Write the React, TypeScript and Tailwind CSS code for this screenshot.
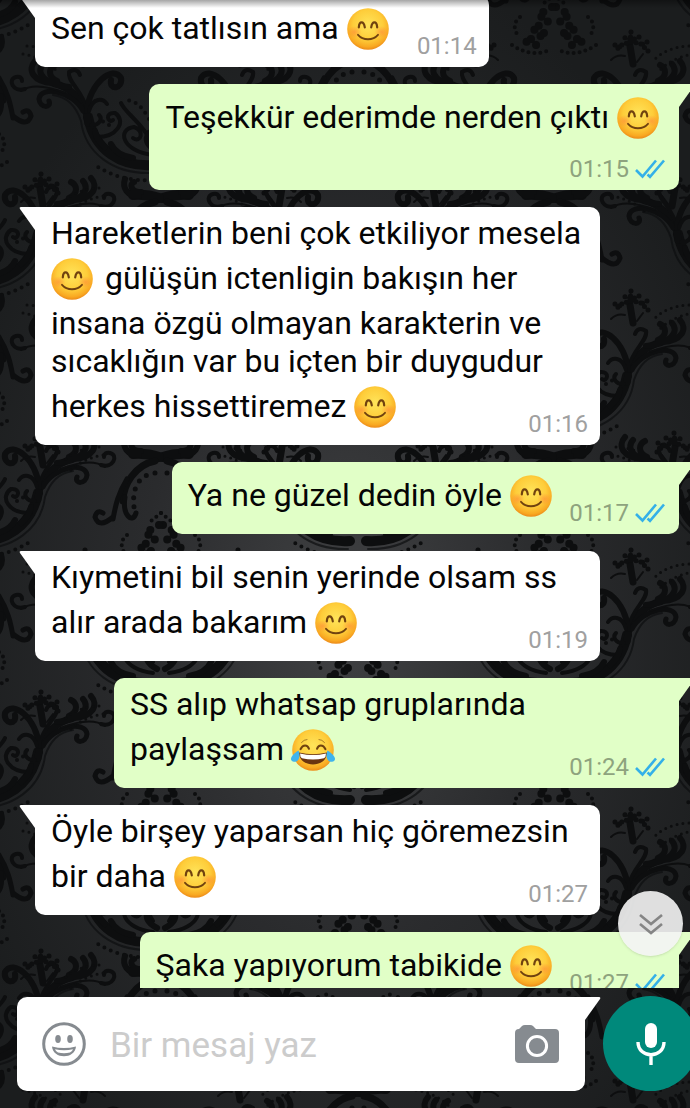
import { useState } from 'react';

interface Message {
  text: string;
  emoji: 'smile' | 'joy';
  after?: string;
  lastEmoji?: boolean;
  time: string;
  sent?: boolean;
  stacked?: boolean;
}

const messages: Message[] = [
  { text: 'Sen çok tatlısın ama', emoji: 'smile', time: '01:14' },
  { text: 'Teşekkür ederimde nerden çıktı', emoji: 'smile', time: '01:15', sent: true, stacked: true },
  {
    text: 'Hareketlerin beni çok etkiliyor mesela',
    emoji: 'smile',
    after: 'gülüşün ictenligin bakışın her insana özgü olmayan karakterin ve sıcaklığın var bu içten bir duygudur herkes hissettiremez',
    lastEmoji: true,
    time: '01:16',
  },
  { text: 'Ya ne güzel dedin öyle', emoji: 'smile', time: '01:17', sent: true },
  { text: 'Kıymetini bil senin yerinde olsam ss alır arada bakarım', emoji: 'smile', time: '01:19' },
  { text: 'SS alıp whatsap gruplarında paylaşsam', emoji: 'joy', time: '01:24', sent: true },
  { text: 'Öyle birşey yaparsan hiç göremezsin bir daha', emoji: 'smile', time: '01:27' },
  { text: 'Şaka yapıyorum tabikide', emoji: 'smile', time: '01:27', sent: true },
];

// Motif origins of the half-drop damask repeat
const columns = [-35, 161, 358, 554, 751];
const motifs = columns.flatMap((x, i) =>
  [0, 1, 2, 3, 4, 5].map((row) => ({ x, y: (i % 2 ? -67 : -209) + row * 259 })),
);

function Wallpaper() {
  return (
    <svg className="absolute inset-0 h-full w-full" aria-hidden="true">
      <defs>
        <radialGradient id="glow" cx="50%" cy="56%" r="60%">
          <stop offset="0" stopColor="#404143" />
          <stop offset="0.5" stopColor="#2a2b2d" />
          <stop offset="1" stopColor="#1b1d1e" />
        </radialGradient>
        <g id="half" fill="none" stroke="#0d0e0f" strokeLinecap="round">
          <path strokeWidth="10" d="M2 6Q14 2 28 3" />
          <path strokeWidth="6" d="M22 4C34 4 39-4 36-13M20 0C30 0 32-8 27-10" />
          <path strokeWidth="7" d="M6 10C26 14 38 34 38 50" />
          <path strokeWidth="5" d="M36 46C39 65 28 73 25 62M34 28C44 44 46 58 48 68M48 66Q62 78 66 66Q64 58 58 62" />
          <path strokeWidth="5" strokeDasharray="0 9" d="M6 22C24 24 29 40 27 56" />
          <path strokeWidth="8" strokeDasharray="0 10" d="M2 74L16 82L5 88L22 96L7 101L30 108L12 114" />
          <path strokeWidth="4" strokeDasharray="0 6" d="M0 62L10 70M34 84Q44 92 35 104M42 112Q24 124 7 118" />
          <path strokeWidth="10" d="M8 232C40 234 66 218 73 184" />
          <path strokeWidth="2" strokeOpacity="0.7" d="M10 240C48 241 76 220 80 188C84 176 92 164 108 162" />
          <path strokeWidth="7" d="M73 190C74 168 91 154 110 149" />
          <path strokeWidth="5" d="M78 178C88 158 120 152 122 166C121 176 109 175 112 168" />
          <path strokeWidth="6" d="M92 154C116 152 126 140 118 131M104 148C114 143 112 135 106 132M108 150C128 149 134 137 126 128" />
          <path strokeWidth="2" d="M96 160Q126 148 140 158" />
          <path strokeWidth="4" d="M136 156C148 160 154 146 145 144Q139 143 139 148M74 176C80 156 94 148 92 139Q84 134 81 142" />
          <path strokeWidth="6" d="M74 178C72 151 48 131 40 145C38 156 52 158 50 147" />
          <path strokeWidth="4" d="M72 178C68 164 58 165 54 171M66 204C44 205 34 188 46 180C57 179 53 191 48 187" />
          <path strokeWidth="4" d="M8 222C40 218 44 196 27 194C16 197 20 211 28 205M8 211C20 188 36 180 40 170M70 192C62 193 58 186 62 182" />
          <path strokeWidth="6" d="M4 218Q19 210 12 200M28 225Q45 222 50 211M56 214Q64 208 66 198" />
          <path strokeWidth="4" strokeDasharray="0 7" d="M2 247C30 249 50 243 66 232M12 186Q24 164 38 168M52 192L62 186" />
          <path strokeWidth="7" d="M118 14L121-4" />
          <path strokeWidth="5" strokeDasharray="0 5" d="M103 1L110-6L118-8L128-6L135 0M112-13L119-10L128-13M120-18L121-8M104-8L112-4M136-5L128-2" />
          <path strokeWidth="2" d="M108 4L114 12M126 6Q134 4 140 10" />
          <path strokeWidth="3" strokeDasharray="0 6" d="M58 4Q79 8 91 20M62-4Q85-3 98 11" />
        </g>
        <g id="motif">
          <use href="#half" />
          <use href="#half" transform="scale(-1 1)" />
        </g>
        <radialGradient id="face" cx="50%" cy="40%" r="60%">
          <stop offset="0" stopColor="#ffe45a" />
          <stop offset="0.6" stopColor="#fecd3a" />
          <stop offset="0.88" stopColor="#f9a922" />
          <stop offset="1" stopColor="#ec8a18" />
        </radialGradient>
        <radialGradient id="blush">
          <stop offset="0" stopColor="#ff7038" stopOpacity="0.45" />
          <stop offset="1" stopColor="#ff7038" stopOpacity="0" />
        </radialGradient>
      </defs>
      <rect width="100%" height="100%" fill="url(#glow)" />
      {motifs.map((m) => (
        <use key={`${m.x}-${m.y}`} href="#motif" x={m.x} y={m.y} />
      ))}
    </svg>
  );
}

function Emoji({ kind }: { kind: 'smile' | 'joy' }) {
  return (
    <svg
      role="img"
      aria-label={kind === 'smile' ? '😊' : '😂'}
      viewBox="0 0 42 42"
      className="mt-1.5 mr-1 mb-1 inline-block h-[42px] w-[42px] overflow-visible align-[-15px]"
    >
      <circle cx="21" cy="21" r="20.8" fill="url(#face)" />
      {kind === 'smile' ? (
        <>
          <ellipse cx="7.5" cy="24" rx="7" ry="6" fill="url(#blush)" />
          <ellipse cx="34.5" cy="24" rx="7" ry="6" fill="url(#blush)" />
          <g fill="none" stroke="#70420f" strokeWidth="2.2" strokeLinecap="round">
            <path d="M11.8 19.4C12.3 12.8 16.7 12.8 17.8 19.4" />
            <path d="M24.2 19.4C25.3 12.8 29.7 12.8 30.2 19.4" />
            <path strokeWidth="1.8" d="M11 26.8C16 32.7 26 32.7 31 26.8" />
          </g>
        </>
      ) : (
        <>
          <g fill="none" stroke="#70420f" strokeWidth="2" strokeLinecap="round">
            <path d="M8.5 20.2C11 15 15.5 15.5 17 19.8" />
            <path d="M25 19.8C26.5 15.5 31 15 33.5 20.2" />
            <path strokeWidth="1" strokeOpacity="0.6" d="M9.5 13.5Q12 10.5 15 10.5M27 10.5Q30 10.5 32.5 13.5" />
          </g>
          <path d="M7 23.5Q21 27 35 23.5C35 39.5 7 39.5 7 23.5Z" fill="#6b3410" />
          <path d="M8 24.4Q21 27.6 34 24.4Q34 28 32 29.2Q21 32 10 29.2Q8 28 8 24.4Z" fill="#fff" />
          <path d="M6.5 21.5C8.5 26 7.5 32.5 3 32.8C-2.5 33-3.2 27.5 6.5 21.5Z" fill="#3fb4ee" />
          <path d="M35.5 21.5C33.5 26 34.5 32.5 39 32.8C44.5 33 45.2 27.5 35.5 21.5Z" fill="#3fb4ee" />
        </>
      )}
    </svg>
  );
}

function Ticks() {
  return (
    <svg viewBox="0 0 30 20" className="h-5 w-[30px]" fill="none" stroke="#34b0e8" strokeWidth="2.6" aria-label="Okundu">
      <path d="M1 11L7.5 17.5L21 1.5M12.5 15.5L15 17.8L29 1.5" />
    </svg>
  );
}

function Bubble({ message }: { message: Message }) {
  const { text, emoji, after, lastEmoji, time, sent, stacked } = message;
  return (
    <li className={sent ? 'flex justify-end pr-[11px]' : 'flex pl-[35px]'}>
      <div
        className={`relative max-w-[565px] rounded-[10px] px-4 pt-[7px] pb-[13px] ${
          sent ? 'rounded-tr-none bg-[#e1ffc7]' : 'rounded-tl-none bg-white'
        }`}
      >
        <svg
          viewBox="0 0 16 24"
          aria-hidden="true"
          className={`absolute top-0 h-6 w-4 ${sent ? 'left-full -scale-x-100 fill-[#e1ffc7]' : 'right-full fill-white'}`}
        >
          <path d="M16 0H2Q0 0 1 2L16 23Z" />
        </svg>
        <p className="text-[32px] leading-[38px] text-[#050505]">
          {text} <Emoji kind={emoji} />
          {after && ` ${after} `}
          {lastEmoji && <Emoji kind={emoji} />}
          {!stacked && <span className={`inline-block ${sent ? 'w-[107px]' : 'w-20'}`} />}
        </p>
        {stacked && <div className="h-[34px]" />}
        <div className={`absolute bottom-[7px] flex items-center gap-1.5 ${sent ? 'right-3.5' : 'right-3'}`}>
          <time className={`text-2xl leading-7 ${sent ? 'text-[#8ea37e]' : 'text-[#a0a0a0]'}`}>{time}</time>
          {sent && <Ticks />}
        </div>
      </div>
    </li>
  );
}

export default function App() {
  const [draft, setDraft] = useState('');

  return (
    <div className="relative flex h-screen flex-col overflow-hidden bg-[#1d1f20] font-[Roboto,'Noto_Sans',sans-serif]">
      <Wallpaper />

      <main className="relative min-h-0 flex-1 overflow-hidden">
        <ul className="-mt-[5px] flex flex-col gap-[17px]">
          {messages.map((message, i) => (
            <Bubble key={i} message={message} />
          ))}
        </ul>
        <div className="absolute inset-x-0 top-0 h-2 bg-gradient-to-b from-black/35 to-transparent" />
        <button
          type="button"
          aria-label="En alta in"
          className="absolute right-[7px] bottom-8 flex h-[65px] w-[65px] items-center justify-center rounded-full bg-[#f4f4f4]/90 shadow"
        >
          <svg viewBox="0 0 24 22" className="h-[22px] w-6" fill="none" stroke="#858585" strokeWidth="2.6">
            <path d="M1 2L12 11L23 2M1 11L12 20L23 11" />
          </svg>
        </button>
      </main>

      <form className="relative flex items-end gap-[18px] pt-2 pb-[17px] pl-[17px]" onSubmit={(e) => e.preventDefault()}>
        <div className="relative flex h-[94px] min-w-0 flex-1 items-center rounded-[10px] rounded-tr-none bg-white pr-[26px] pl-[25px]">
          <svg viewBox="0 0 16 24" aria-hidden="true" className="absolute top-0 left-full h-6 w-4 -scale-x-100 fill-white">
            <path d="M16 0H2Q0 0 1 2L16 23Z" />
          </svg>
          <button type="button" aria-label="Emoji" className="shrink-0">
            <svg viewBox="0 0 44 44" className="h-11 w-11" fill="#868b90">
              <circle cx="22" cy="22" r="20.3" fill="none" stroke="#868b90" strokeWidth="3" />
              <ellipse cx="16" cy="17" rx="2.8" ry="4" />
              <ellipse cx="28" cy="17" rx="2.8" ry="4" />
              <path
                fillRule="evenodd"
                d="M10 24.5Q22 27.5 34 24.5C33 37.5 11 37.5 10 24.5ZM13 27.3Q14 30 16 30.5Q22 32 28 30.5Q30 30 31 27.3Q22 29 13 27.3Z"
              />
            </svg>
          </button>
          <input
            type="text"
            aria-label="Mesaj"
            placeholder="Bir mesaj yaz"
            value={draft}
            onChange={(e) => setDraft(e.target.value)}
            className="ml-6 min-w-0 flex-1 bg-transparent pt-1 text-[35px] leading-10 outline-none placeholder:text-[#cccccc]"
          />
          <button type="button" aria-label="Kamera" className="shrink-0">
            <svg viewBox="0 0 44 38" className="h-[38px] w-11">
              <path d="M4 4L7 1Q8 0 10 0H15Q17 0 18 1L21 4H40Q44 4 44 8V34Q44 38 40 38H4Q0 38 0 34V8Q0 4 4 4Z" fill="#868b90" />
              <circle cx="22" cy="21" r="9.6" fill="none" stroke="#fff" strokeWidth="3" />
            </svg>
          </button>
        </div>
        <button
          type="button"
          aria-label="Sesli mesaj"
          className="-mr-2 flex h-[95px] w-[95px] shrink-0 items-center justify-center rounded-full bg-[#00897b]"
        >
          <svg viewBox="0 0 30 42" className="h-[42px] w-[30px]" fill="none" stroke="#fff" strokeWidth="3.4">
            <rect x="9" y="0" width="12" height="25" rx="6" fill="#fff" stroke="none" />
            <path d="M2 19C2 36 28 36 28 19M15 31V42" />
          </svg>
        </button>
      </form>
    </div>
  );
}
